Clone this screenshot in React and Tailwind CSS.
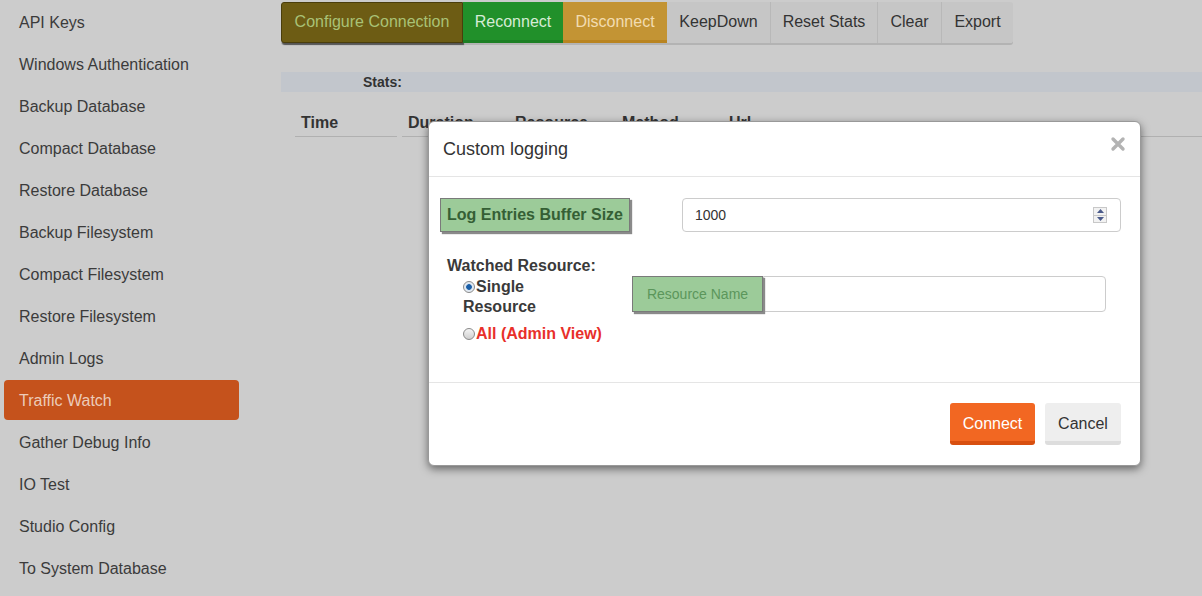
const font = { fontFamily: '"Liberation Sans", Arial, sans-serif' }

const menu = [
  'API Keys',
  'Windows Authentication',
  'Backup Database',
  'Compact Database',
  'Restore Database',
  'Backup Filesystem',
  'Compact Filesystem',
  'Restore Filesystem',
  'Admin Logs',
  'Traffic Watch',
  'Gather Debug Info',
  'IO Test',
  'Studio Config',
  'To System Database',
]

function Sidebar() {
  return (
    <div className="w-[281px] shrink-0 pl-1 pr-[42px] pt-[2px] flex flex-col gap-[2px]">
      {menu.map((m) => (
        <div
          key={m}
          className={
            m === 'Traffic Watch'
              ? 'h-10 flex items-center pl-[15px] pt-[2px] rounded-[4px] bg-[#c5521c] text-[#eccbb9] text-[16px]'
              : 'h-10 flex items-center pl-[15px] pt-[2px] text-[#3b3b3b] text-[16px]'
          }
        >
          {m}
        </div>
      ))}
    </div>
  )
}

function Toolbar() {
  const grey = 'h-full flex items-center justify-center whitespace-nowrap bg-[#c6c6c6] text-[#333] border-r border-[#b8b8b8] pb-[1px]'
  return (
    <div className="flex h-[41px] w-[732px] text-[16px] rounded-[3px] shadow-[0_2px_0_#b3b3b3]">
      <div className="h-full w-[182px] flex items-center justify-center whitespace-nowrap pb-[1px] bg-[#6d5c14] text-[#a9c276] border border-[#4a3e0c] shadow-[1px_2px_1px_#555] rounded-l-[3px]">
        Configure Connection
      </div>
      <div className="h-full w-[100px] flex items-center justify-center whitespace-nowrap pb-[1px] bg-[#21902a] text-[#d6ecd6] shadow-[inset_0_-3px_0_#1c7f24]">
        Reconnect
      </div>
      <div className="h-full w-[104px] flex items-center justify-center whitespace-nowrap pb-[1px] bg-[#c39434] text-[#f2dcb0] shadow-[inset_0_-3px_0_#b98420]">
        Disconnect
      </div>
      <div className={grey + ' w-[104px]'}>KeepDown</div>
      <div className={grey + ' w-[107px]'}>Reset Stats</div>
      <div className={grey + ' w-[64px]'}>Clear</div>
      <div className="h-full w-[71px] flex items-center justify-center pb-[1px] bg-[#c6c6c6] text-[#333] rounded-r-[3px]">Export</div>
    </div>
  )
}

function Main() {
  const cols = ['Time', 'Duration', 'Resource', 'Method', 'Url']
  return (
    <div className="flex-1 pt-[2px]">
      <Toolbar />
      <div className="mt-[29px] h-5 bg-[#c2c6cc] flex items-center pl-[82px] text-[14px] font-bold text-[#333]">
        Stats:
      </div>
      <div className="mt-[15px] ml-[14px] flex gap-[5px]">
        {cols.map((c) => (
          <div key={c} className="w-[102px] h-[30px] flex items-center pl-[6px] pt-[2px] border-b border-[#b0b0b0] text-[16px] font-bold text-[#333]">
            {c}
          </div>
        ))}
        <div className="flex-1 border-b border-[#b0b0b0]" />
      </div>
    </div>
  )
}

function Spinner() {
  return (
    <div className="flex flex-col w-[14px] h-[16px] border border-[#c8c8c8] bg-[#f2f2f2]">
      <div className="flex-1 flex items-center justify-center border-b border-[#c8c8c8]">
        <svg width="7" height="4" viewBox="0 0 7 4"><path d="M0 4 L3.5 0 L7 4 Z" fill="#4a5a8a" /></svg>
      </div>
      <div className="flex-1 flex items-center justify-center">
        <svg width="7" height="4" viewBox="0 0 7 4"><path d="M0 0 L3.5 4 L7 0 Z" fill="#4a5a8a" /></svg>
      </div>
    </div>
  )
}

function Radio({ checked }) {
  return (
    <span
      className={
        'inline-block w-[12px] h-[12px] rounded-full border border-[#8a8a8a] mr-[1px] align-[-1px] ' +
        (checked ? 'bg-[radial-gradient(circle,#1a5fa8_0,#1a5fa8_35%,#dbe6f2_45%,#f4f4f4_100%)]' : 'bg-[linear-gradient(#f4f4f4,#cfcfcf)]')
      }
    />
  )
}

function Modal() {
  return (
    <div className="absolute left-[428px] top-[121px] w-[713px] h-[345px] bg-white rounded-[6px] border border-[#999] shadow-[0_3px_9px_rgba(0,0,0,0.5)]">
      <div className="h-[55px] border-b border-[#e5e5e5] flex items-center justify-between pl-[14px] pr-[14px]">
        <div className="text-[18px] text-[#333]">Custom logging</div>
        <svg width="16" height="16" viewBox="0 0 16 16" className="mt-[-10px]">
          <path d="M3 3 L13 13 M13 3 L3 13" stroke="#b3b3b3" strokeWidth="3.4" strokeLinecap="round" />
        </svg>
      </div>
      <div className="h-[206px] border-b border-[#e5e5e5] pt-[21px]">
        <div className="flex items-center pl-[11px] pr-[19px]">
          <div className="w-[190px] h-[34px] flex items-center justify-center bg-[#9ccb99] border border-[#7a7a7a] shadow-[2px_2px_1px_#8a8a8a] text-[16px] font-bold text-[#355f35]">
            Log Entries Buffer Size
          </div>
          <div className="ml-[52px] flex-1 h-[34px] rounded-[4px] border border-[#cccccc] flex items-center justify-between pl-[12px] pr-[13px] text-[14px] text-[#333]">
            <span>1000</span>
            <Spinner />
          </div>
        </div>
        <div className="flex pl-[18px] pr-[34px] mt-[24px]">
          <div className="w-[185px] text-[16px] font-bold text-[#3a3a3a] leading-[20px]">
            <div>Watched Resource:</div>
            <div className="pl-[16px] w-[120px] mt-[1px]">
              <Radio checked />Single Resource
            </div>
            <div className="pl-[16px] mt-[7px] text-[#e8302a]">
              <Radio />All (Admin View)
            </div>
          </div>
          <div className="flex-1 flex mt-[20px] h-[36px]">
            <div className="w-[131px] h-[36px] flex items-center justify-center bg-[#9ccb99] border border-[#7a7a7a] shadow-[2px_2px_1px_#8a8a8a] text-[14px] text-[#5b965b] relative z-10">
              Resource Name
            </div>
            <div className="flex-1 h-[36px] border border-[#cccccc] rounded-r-[4px]" />
          </div>
        </div>
      </div>
      <div className="flex justify-end gap-[10px] pr-[19px] pt-[20px]">
        <div className="w-[85px] h-[42px] flex items-center justify-center rounded-[3px] bg-[#f26722] border-b-[4px] border-[#d84f10] text-white text-[16px] pt-[4px]">
          Connect
        </div>
        <div className="w-[76px] h-[42px] flex items-center justify-center rounded-[3px] bg-[#eeeeee] border-b-[4px] border-[#dddddd] text-[#333] text-[16px] pt-[4px]">
          Cancel
        </div>
      </div>
    </div>
  )
}

export default function App() {
  return (
    <div style={font} className="relative w-[1202px] h-[596px] overflow-hidden bg-[#cccccc] flex">
      <Sidebar />
      <Main />
      <Modal />
    </div>
  )
}
